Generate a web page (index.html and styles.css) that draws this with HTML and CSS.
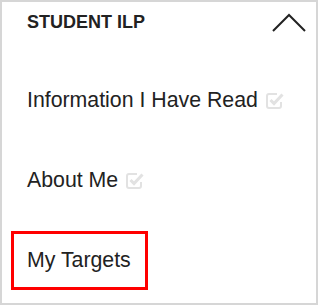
FILE: index.html
```html
<!DOCTYPE html>
<html lang="en">
<head>
    <meta charset="UTF-8">
    <meta name="viewport" content="width=device-width, initial-scale=1.0">
    <title>Student ILP</title>
    <link rel="stylesheet" href="styles.css">
</head>
<body>
    <div class="panel">
        <div class="panel-heading">
            <span class="panel-title">STUDENT ILP</span>
            <svg class="chevron" width="34" height="19" viewBox="0 0 34 19">
                <polyline points="1,18 17,2 33,18" fill="none" stroke="#222" stroke-width="2"/>
            </svg>
        </div>
        <ul class="menu">
            <li class="menu-item">
                <span>Information I Have Read</span>
                <svg class="tick" width="18" height="17" viewBox="0 0 18 17">
                    <path d="M11 2 H3 a2 2 0 0 0 -2 2 v10 a2 2 0 0 0 2 2 h10 a2 2 0 0 0 2 -2 v-4" fill="none" stroke="#e2e2e2" stroke-width="2"/>
                    <polyline points="4.5,8 8,11.5 16.5,2.5" fill="none" stroke="#e2e2e2" stroke-width="3"/>
                </svg>
            </li>
            <li class="menu-item">
                <span>About Me</span>
                <svg class="tick" width="18" height="17" viewBox="0 0 18 17">
                    <path d="M11 2 H3 a2 2 0 0 0 -2 2 v10 a2 2 0 0 0 2 2 h10 a2 2 0 0 0 2 -2 v-4" fill="none" stroke="#e2e2e2" stroke-width="2"/>
                    <polyline points="4.5,8 8,11.5 16.5,2.5" fill="none" stroke="#e2e2e2" stroke-width="3"/>
                </svg>
            </li>
            <li class="menu-item">
                <span class="highlight">My Targets</span>
            </li>
        </ul>
    </div>
</body>
</html>
```

FILE: styles.css
```css
body {
    margin: 0;
    font-family: "Liberation Sans", Arial, sans-serif;
    color: #222;
}

.panel {
    width: 318px;
    height: 305px;
    box-sizing: border-box;
    border: 2px solid #d6d6d6;
    background: #fff;
}

.panel-heading {
    display: flex;
    align-items: center;
    justify-content: space-between;
    height: 40px;
    padding: 0 10px 0 25px;
}

.panel-title {
    font-size: 18px;
    font-weight: bold;
    line-height: 40px;
}

.chevron {
    display: block;
}

.menu {
    list-style: none;
    margin: 0;
    padding: 18px 0 0 0;
}

.menu-item {
    display: flex;
    align-items: center;
    height: 80px;
    padding-left: 25px;
    font-size: 21.3px;
}

.tick {
    margin-left: 8px;
}

.highlight {
    margin-left: -16px;
    padding: 14px 14px 14px 13px;
    border: 3px solid #ff0000;
}
```
